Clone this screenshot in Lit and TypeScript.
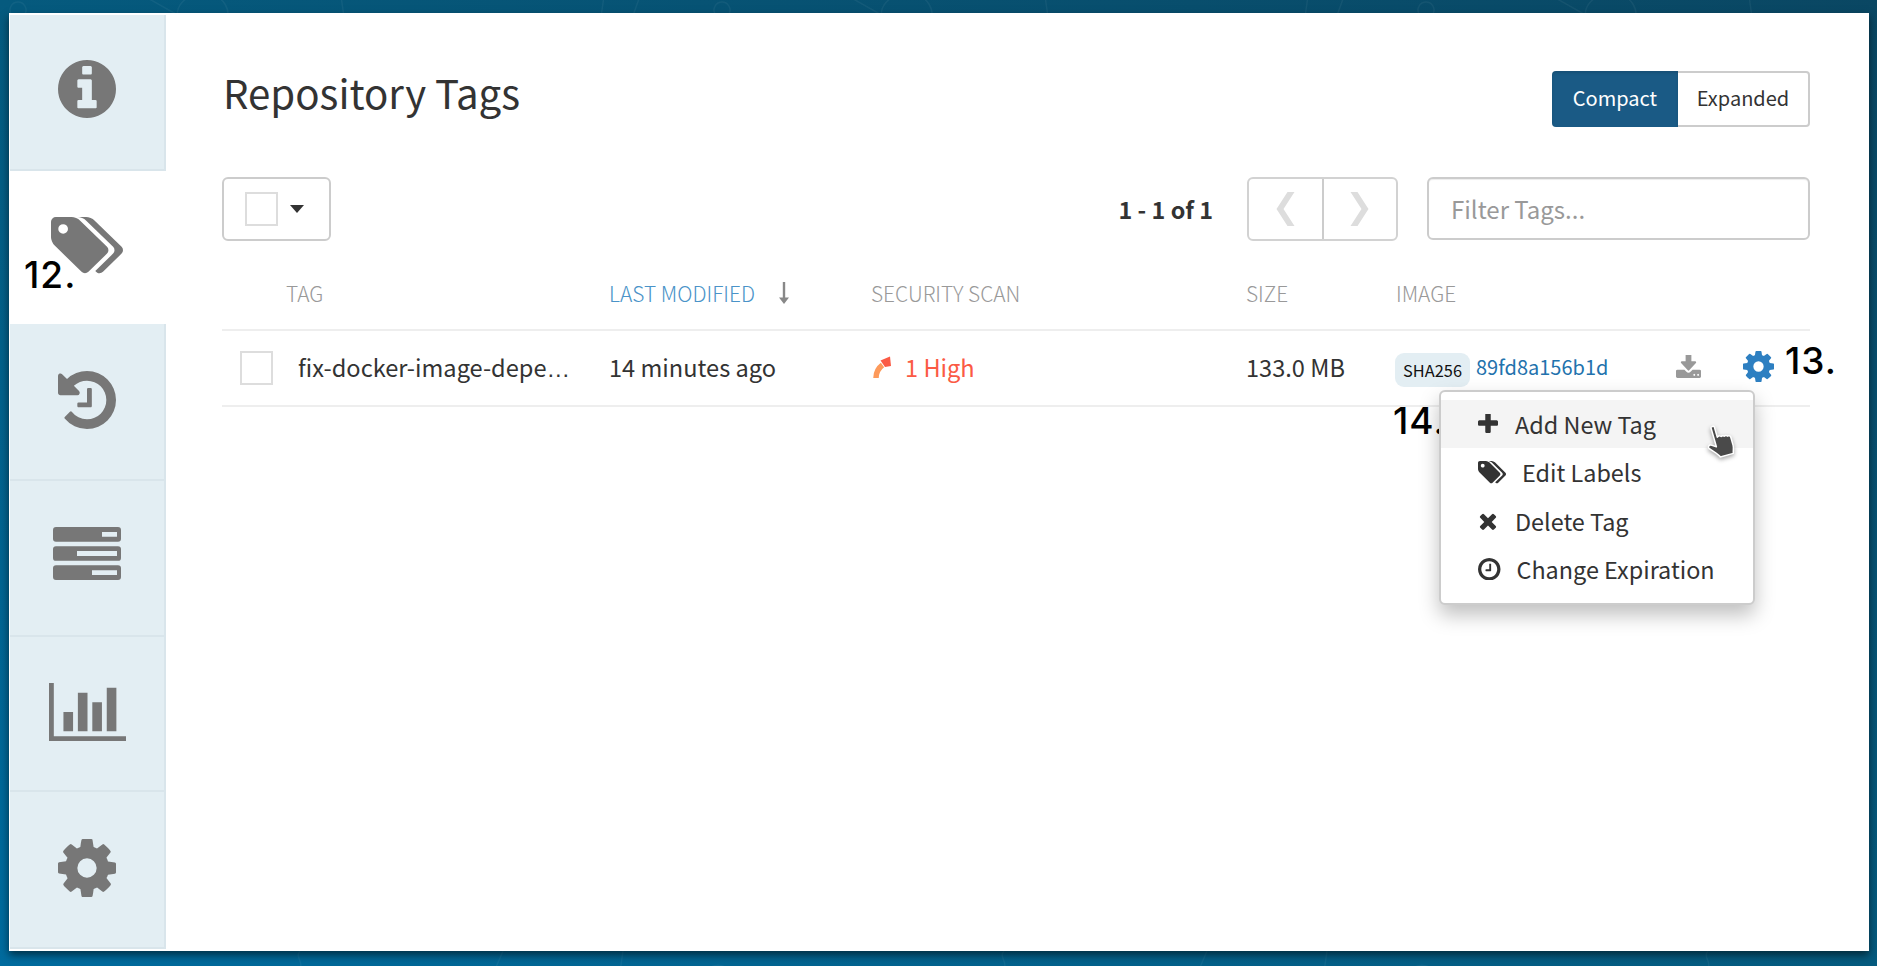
import { LitElement, html, css, svg } from "lit";
import { customElement } from "lit/decorators.js";

const P = {
  info: "M1024 1376v-160q0-14-9-23t-23-9h-96v-512q0-14-9-23t-23-9h-320q-14 0-23 9t-9 23v160q0 14 9 23t23 9h96v320h-96q-14 0-23 9t-9 23v160q0 14 9 23t23 9h448q14 0 23-9t9-23zm-128-896v-160q0-14-9-23t-23-9h-192q-14 0-23 9t-9 23v160q0 14 9 23t23 9h192q14 0 23-9t9-23zm640 416q0 209-103 385.500t-279.500 279.500-385.500 103-385.500-103-279.500-279.500-103-385.500 103-385.500 279.500-279.500 385.500-103 385.500 103 279.500 279.500 103 385.500z",
  tags: "M384 448q0-53-37.500-90.500t-90.500-37.500-90.500 37.500-37.500 90.500 37.500 90.500 90.500 37.500 90.500-37.500 37.500-90.500zm1067 576q0 53-37 90l-491 492q-39 37-91 37-53 0-90-37l-715-716q-38-37-64.500-101t-26.500-117v-416q0-52 38-90t90-38h416q53 0 117 26.500t102 64.500l715 714q37 39 37 91zm384 0q0 53-37 90l-491 492q-39 37-91 37-36 0-59-14t-53-45l470-470q37-37 37-90 0-52-37-91l-715-714q-38-38-102-64.500t-117-26.500h224q53 0 117 26.500t102 64.500l715 714q37 39 37 91z",
  history: "M1664 896q0 156-61 298t-164 245-245 164-298 61q-172 0-327-72.500t-264-204.500q-7-10-6.500-22.500t8.500-20.500l137-138q10-9 25-9 16 2 23 12 73 95 179 147t225 52q104 0 198.500-40.500t163.500-109.500 109.500-163.500 40.500-198.500-40.500-198.500-109.500-163.500-163.500-109.500-198.500-40.500q-98 0-188 35.500t-160 101.500l137 138q31 30 14 69-17 40-59 40h-448q-26 0-45-19t-19-45v-448q0-42 40-59 39-17 69 14l130 129q107-101 244.500-156.500t284.500-55.500q156 0 298 61t245 164 164 245 61 298zm-640-288v448q0 14-9 23t-23 9h-320q-14 0-23-9t-9-23v-64q0-14 9-23t23-9h224v-352q0-14 9-23t23-9h64q14 0 23 9t9 23z",
  cog: "M1152 896q0-106-75-181t-181-75-181 75-75 181 75 181 181 75 181-75 75-181zm512-109v222q0 12-8 23t-20 13l-185 28q-19 54-39 91 35 50 107 138 10 12 10 25t-9 23q-27 37-99 108t-94 71q-12 0-26-9l-138-108q-44 23-91 38-16 136-29 186-7 28-36 28h-222q-14 0-24.500-8.500t-11.500-21.500l-28-184q-49-16-90-37l-141 107q-10 9-25 9-14 0-25-11-126-114-165-168-7-10-7-23 0-12 8-23 15-21 51-66.500t54-70.500q-27-50-41-99l-183-27q-13-2-21-12.500t-8-23.500v-222q0-12 8-23t19-13l186-28q14-46 39-92-40-57-107-138-10-12-10-24 0-10 9-23 26-36 98.500-107.500t94.500-71.500q13 0 26 10l138 107q44-23 91-38 16-136 29-186 7-28 36-28h222q14 0 24.500 8.500t11.500 21.500l28 184q49 16 90 37l142-107q9-9 24-9 13 0 25 10 129 119 165 170 7 8 7 22 0 12-8 23-15 21-51 66.500t-54 70.500q26 50 41 98l183 28q13 2 21 12.500t8 23.500z",
  chart: "M512 896v512h-256v-512h256zm384-512v1024h-256v-1024h256zm1024 1152v128h-2048v-1536h128v1408h1920zm-640-896v768h-256v-768h256zm384-384v1152h-256v-1152h256z",
  plus: "M1600 736v192q0 40-28 68t-68 28h-416v416q0 40-28 68t-68 28h-192q-40 0-68-28t-28-68v-416h-416q-40 0-68-28t-28-68v-192q0-40 28-68t68-28h416v-416q0-40 28-68t68-28h192q40 0 68 28t28 68v416h416q40 0 68 28t28 68z",
  times: "M1490 1322q0 40-28 68l-136 136q-28 28-68 28t-68-28l-294-294-294 294q-28 28-68 28t-68-28l-136-136q-28-28-28-68t28-68l294-294-294-294q-28-28-28-68t28-68l136-136q28-28 68-28t68 28l294 294 294-294q28-28 68-28t68 28l136 136q28 28 28 68t-28 68l-294 294 294 294q28 28 28 68z",
  clock: "M1024 544v448q0 14-9 23t-23 9h-320q-14 0-23-9t-9-23v-64q0-14 9-23t23-9h224v-352q0-14 9-23t23-9h64q14 0 23 9t9 23zm416 352q0-148-73-273t-198-198-273-73-273 73-198 198-73 273 73 273 198 198 273 73 273-73 198-198 73-273zm224 0q0 209-103 385.500t-279.500 279.500-385.500 103-385.500-103-279.500-279.500-103-385.500 103-385.500 279.500-279.500 385.500-103 385.500 103 279.500 279.500 103 385.500z",
  download: "M1344 1344q0-26-19-45t-45-19-45 19-19 45 19 45 45 19 45-19 19-45zm256 0q0-26-19-45t-45-19-45 19-19 45 19 45 45 19 45-19 19-45zm128-224v320q0 40-28 68t-68 28h-1472q-40 0-68-28t-28-68v-320q0-40 28-68t68-28h465l135 136q58 56 136 56t136-56l136-136h464q40 0 68 28t28 68zm-325-569q17 41-14 70l-448 448q-18 19-45 19t-45-19l-448-448q-31-29-14-70 17-39 59-39h256v-448q0-26 19-45t45-19h256q26 0 45 19t19 45v448h256q42 0 59 39z",
};

const VB = {
  circle: "128 128 1536 1536",
  info: "0 128 1536 1536",
  tags: "-64 128 1899 1536",
  chart: "-128 128 2048 1536",
  plus: "192 192 1408 1408",
  times: "238 238 1316 1316",
  dl: "64 128 1664 1408",
};

const icon = (d: string, cls: string, vb: string) =>
  html`<svg class=${cls} viewBox=${vb} fill="currentColor" preserveAspectRatio="none" aria-hidden="true">${svg`<path d=${d}></path>`}</svg>`;

const motif = svg`
  <path d="M144 -4 L190 22 M180 24 C172 8 184 -6 204 -6 C224 -6 232 10 226 24 M341 -4 L345 24 M600 24 L604 -4 M630 24 L640 -4 M18 2 a8 8 0 1 0 .01 0"></path>
  <path d="M300 951 C294 958 306 962 298 972 M503 951 L494 972 M623 951 L620 972 M706 972 a14 14 0 0 1 24 0"></path>`;

@customElement("app-root")
export class AppRoot extends LitElement {
  static styles = css`
    :host {
      display: block;
      position: relative;
      width: 1877px;
      height: 966px;
      overflow: hidden;
      padding: 13px 8px 15px 9px;
      box-sizing: border-box;
      background: linear-gradient(to bottom left, #0a4763 0%, #055a7e 50%, #006b9e 100%);
      font-family: "Noto Sans CJK JP", "Noto Sans", sans-serif;
      color: #333;
      font-size: 23.6px;
    }
    * { box-sizing: border-box; }
    .pattern {
      position: absolute;
      inset: 0;
      width: 100%;
      height: 100%;
      fill: none;
      stroke: rgba(255, 255, 255, 0.05);
      stroke-width: 1.5;
    }
    .frame {
      height: 100%;
      background: #fff;
      display: flex;
      position: relative;
      box-shadow: 0 4px 8px rgba(0, 0, 0, 0.55);
      padding: 2px 0 2px 1px;
    }
    .side {
      width: 156px;
      flex: none;
      display: grid;
      grid-template-rows: 156px 153px 157px 156px 155px 157px;
    }
    .tab {
      background: #e3eef3;
      border: 2px solid #d9e5eb;
      border-width: 0 2px 2px 0;
      display: flex;
      align-items: center;
      justify-content: center;
      color: #777;
    }
    .tab.active { background: #fff; border-color: #fff; }
    .tab svg { width: 58px; height: 58px; display: block; margin-bottom: 3px; }
    .tab .info { margin-bottom: 6px; }
    .tab .tg { width: 72px; height: 57px; }
    .tab .srv { width: 68px; height: 53px; margin-bottom: 9px; }
    .tab .bars { width: 77px; height: 58px; }
    .main {
      flex: 1;
      padding: 0 59px 0 56px;
      min-width: 0;
    }
    .head {
      display: flex;
      justify-content: space-between;
      align-items: flex-end;
      height: 112px;
    }
    h1 {
      margin: 0 0 11px 1px;
      font-size: 40.2px;
      line-height: 48px;
      font-weight: 400;
      color: #333;
    }
    .toggle {
      display: flex;
      height: 56px;
      width: 258px;
    }
    .toggle div {
      display: flex;
      align-items: center;
      justify-content: center;
      font-size: 20px;
      padding-bottom: 3px;
    }
    .toggle .on {
      width: 126px;
      background: #1a5a85;
      color: #fff;
      border-radius: 4px 0 0 4px;
      box-shadow: inset 0 2px 3px rgba(0, 0, 0, 0.12);
    }
    .toggle .off {
      flex: 1;
      border: 2px solid #ccc;
      border-left: 0;
      border-radius: 0 4px 4px 0;
    }
    .tools {
      display: flex;
      align-items: center;
      height: 64px;
      margin-top: 50px;
    }
    .pick {
      width: 109px;
      height: 64px;
      border: 2px solid #ccc;
      border-radius: 6px;
      display: flex;
      align-items: center;
      padding-left: 21px;
      gap: 12px;
    }
    .box {
      width: 33px;
      height: 34px;
      border: 2px solid #ddd;
      display: block;
      flex: none;
    }
    .caret {
      width: 0;
      height: 0;
      border: 7.5px solid transparent;
      border-top: 8px solid #333;
      border-bottom: 0;
    }
    .count {
      margin-left: auto;
      font-weight: 700;
      margin-right: 34px;
      font-size: 23.4px;
    }
    .pager {
      width: 151px;
      height: 64px;
      border: 2px solid #d2d2d2;
      border-radius: 6px;
      display: flex;
      color: #ddd;
      margin-right: 29px;
    }
    .pager span {
      flex: 1;
      display: flex;
      align-items: center;
      justify-content: center;
    }
    .pager span + span { border-left: 2px solid #ccc; }
    .pager svg { width: 19px; height: 34px; display: block; }
    .filter {
      width: 383px;
      height: 63px;
      margin-top: -1px;
      border: 2px solid #ccc;
      border-radius: 6px;
      padding: 0 23px 1px 22px;
      display: flex;
      align-items: center;
      color: #999;
      font-size: 24px;
      box-shadow: inset 0 1px 1px rgba(0, 0, 0, 0.075);
    }
    .grid {
      display: grid;
      grid-template-columns: 64px 323px 262px 375px 150px 1fr;
    }
    .th {
      height: 89.5px;
      padding: 17px 0 1px;
      display: flex;
      align-items: center;
      border-bottom: 2px solid #eee;
      font-family: "Noto Sans CJK JP Light", "Noto Sans CJK JP DemiLight", "Noto Sans CJK JP", sans-serif;
      font-weight: 300;
      color: #999;
      font-size: 20.9px;
    }
    .th.sort { color: #4a93c8; gap: 24px; }
    .th.sort svg { width: 10px; height: 22px; color: #888; flex: none; }
    .td {
      height: 76px;
      display: flex;
      align-items: center;
      border-bottom: 2px solid #eee;
      white-space: nowrap;
      padding-bottom: 2px;
    }
    .td .box { margin: 2px 0 0 18px; }
    .tagname { padding-left: 12px; }
    .ell { font-family: "Liberation Sans", sans-serif; }
    .high { color: #fb5a44; gap: 14px; }
    .gauge { width: 18px; height: 22px; display: block; flex: none; margin-left: 2px; }
    .sha {
      background: #e3eef3;
      border-radius: 9px;
      font-size: 16.4px;
      color: #111;
      width: 75px;
      height: 34px;
      display: inline-flex;
      align-items: center;
      justify-content: center;
      margin: 6px 6px 0 -1px;
      flex: none;
    }
    .hash { color: #2272ad; font-size: 20px; }
    .dl { width: 25px; height: 23px; color: #999; margin-left: 68px; flex: none; }
    .gear { width: 31px; height: 31px; color: #2d7fc1; margin-left: 42px; flex: none; }
    .note {
      position: absolute;
      font-family: Inter, Roboto, sans-serif;
      font-weight: 500;
      font-size: 37px;
      letter-spacing: 1px;
      color: #000;
      line-height: 1;
    }
    .n12 { left: 24px; top: 256px; }
    .n13 { left: 1785px; top: 342px; }
    .n14 { left: 1393px; top: 402px; }
    .menu {
      position: absolute;
      left: 1439px;
      top: 390px;
      width: 316px;
      height: 215px;
      background: #fff;
      border: 2px solid #ccc;
      border-radius: 6px;
      box-shadow: 0 10px 20px rgba(0, 0, 0, 0.25);
      padding: 8px 0;
      color: #333;
      font-size: 23.4px;
    }
    .mi {
      height: 48.3px;
      display: flex;
      align-items: center;
      padding-left: 37px;
    }
    .mi.hov { background: #f4f4f4; }
    .mi svg { flex: none; display: block; }
    .i1 { width: 20px; height: 20px; margin-right: 17px; }
    .i2 { width: 28px; height: 22.5px; margin-right: 16px; }
    .i3 { width: 18px; height: 18px; margin: 0 18px 0 1px; }
    .i4 { width: 22.5px; height: 22.5px; margin-right: 16px; }
    .hand {
      position: absolute;
      left: 1704px;
      top: 423px;
      width: 36px;
      height: 36px;
      overflow: visible;
      filter: drop-shadow(0 2px 2px rgba(0, 0, 0, 0.35));
    }
  `;

  render() {
    return html`
      <svg class="pattern" viewBox="0 0 1877 966" aria-hidden="true">
        ${[0, 1, 2].map((i) => svg`<g transform="translate(${i * 704} 0)">${motif}</g>`)}
      </svg>
      <div class="frame">
        <nav class="side">
          <div class="tab">${icon(P.info, "info", VB.info)}</div>
          <div class="tab active">${icon(P.tags, "tg", VB.tags)}</div>
          <div class="tab">${icon(P.history, "", VB.circle)}</div>
          <div class="tab">
            <svg class="srv" viewBox="0 0 68 54" fill="currentColor" preserveAspectRatio="none" aria-hidden="true">
              <path fill-rule="evenodd" d="M3 0h62a3 3 0 0 1 3 3v9a3 3 0 0 1-3 3H3a3 3 0 0 1-3-3V3a3 3 0 0 1 3-3zm46 5v5h15V5zM3 19.500h62a3 3 0 0 1 3 3v9a3 3 0 0 1-3 3H3a3 3 0 0 1-3-3v-9a3 3 0 0 1 3-3zm21 5v5h40v-5zM3 39h62a3 3 0 0 1 3 3v9a3 3 0 0 1-3 3H3a3 3 0 0 1-3-3v-9a3 3 0 0 1 3-3zm36 5v5h25v-5z"></path>
            </svg>
          </div>
          <div class="tab">${icon(P.chart, "bars", VB.chart)}</div>
          <div class="tab">${icon(P.cog, "", VB.circle)}</div>
        </nav>
        <main class="main">
          <div class="head">
            <h1>Repository Tags</h1>
            <div class="toggle"><div class="on">Compact</div><div class="off">Expanded</div></div>
          </div>
          <div class="tools">
            <div class="pick"><span class="box"></span><span class="caret"></span></div>
            <div class="count">1 - 1 of 1</div>
            <div class="pager">
              <span><svg viewBox="0 0 18 34" fill="currentColor" aria-hidden="true"><path d="M11 0h7L7 17l11 17h-7L0 17z"></path></svg></span>
              <span><svg viewBox="0 0 18 34" fill="currentColor" aria-hidden="true"><path d="M7 0H0l11 17L0 34h7l11-17z"></path></svg></span>
            </div>
            <div class="filter">Filter Tags...</div>
          </div>
          <div class="grid">
            <div class="th"></div>
            <div class="th">TAG</div>
            <div class="th sort">LAST MODIFIED
              <svg viewBox="0 0 10 22" fill="currentColor" aria-hidden="true"><path d="M3.800 0h2.400v15.500H10L5 22 0 15.500h3.800z"></path></svg>
            </div>
            <div class="th">SECURITY SCAN</div>
            <div class="th">SIZE</div>
            <div class="th">IMAGE</div>

            <div class="td"><span class="box"></span></div>
            <div class="td"><span class="tagname">fix-docker-image-depe<span class="ell">…</span></span></div>
            <div class="td">14 minutes ago</div>
            <div class="td high">
              <svg class="gauge" viewBox="0 0 18 22" fill="none" aria-hidden="true">
                <path d="M3 22C3 16 5.500 12 9.500 9" stroke="#fd9a5b" stroke-width="5.500"></path>
                <path d="M7.500 4.500 17 0.500 18 10 12 11z" fill="#fb5a44"></path>
              </svg>
              1 High
            </div>
            <div class="td">133.0 MB</div>
            <div class="td">
              <span class="sha">SHA256</span><span class="hash">89fd8a156b1d</span>
              ${icon(P.download, "dl", VB.dl)}
              ${icon(P.cog, "gear", VB.circle)}
            </div>
          </div>
        </main>
      </div>
      <div class="note n12">12.</div>
      <div class="note n13">13.</div>
      <div class="note n14">14.</div>
      <div class="menu">
        <div class="mi hov">${icon(P.plus, "i1", VB.plus)}Add New Tag</div>
        <div class="mi">${icon(P.tags, "i2", VB.tags)}Edit Labels</div>
        <div class="mi">${icon(P.times, "i3", VB.times)}Delete Tag</div>
        <div class="mi">${icon(P.clock, "i4", VB.circle)}Change Expiration</div>
      </div>
      <svg class="hand" viewBox="0 0 34 36" aria-hidden="true">
        <path transform="rotate(-16 17 18)" d="M10 2.500c0-1.500 3.500-1.500 3.500 0V13l1-.5c1-.5 2.500 0 3 1 1-.8 2.500-.5 3 .5 1-.6 2.500-.3 3 .8 1-.3 3 .2 3 2V25c0 3-1.500 5-2 8H11c-.5-3-7-9-8.500-11.500-1-2 1-3.500 3-2.500L10 22z" fill="#4a4a4a" stroke="#fff" stroke-width="1.500" stroke-linejoin="round"></path>
      </svg>
    `;
  }
}
